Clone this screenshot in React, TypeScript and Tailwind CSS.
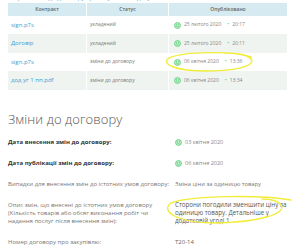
import React from "react";

const ClockIcon = () => (
  <svg width="7" height="7" viewBox="0 0 12 12" className="shrink-0">
    <circle cx="6" cy="6" r="5" fill="#c9f0d3" stroke="#5fcf7c" strokeWidth="1.6" />
    <path d="M4.2 3.6 V6.4 A1.8 1.8 0 0 0 7.8 6.4 V3.6" fill="none" stroke="#5fcf7c" strokeWidth="1.3" strokeLinecap="round" />
  </svg>
);

const rows = [
  { file: "sign.p7s", status: "укладений", date: "25 лютого 2020", time: "20:17", gray: false, h: "h-[18px]" },
  { file: "Договір", status: "укладений", date: "25 лютого 2020", time: "20:11", gray: true, h: "h-[19px]" },
  { file: "sign.p7s", status: "зміни до договору", date: "06 квітня 2020", time: "13:36", gray: false, h: "h-[18px]" },
  { file: "дод уг 1 пп.pdf", status: "зміни до договору", date: "06 квітня 2020", time: "13:34", gray: true, h: "h-[19px]" },
];

export default function App() {
  return (
    <div
      className="relative w-[300px] h-[247px] overflow-hidden bg-white"
      style={{ fontFamily: '"Open Sans", "Noto Sans", sans-serif' }}
    >
      <div className="h-[2px] overflow-hidden pl-[10px]">
        <div className="-mt-[6px] text-[6px] leading-[8px] text-[#3b9fd6] whitespace-nowrap">
          Перелік змін до договору про закупівлю та документи
        </div>
      </div>
      <div className="ml-[8px] mt-[1px] w-[279px]">
        <div className="grid grid-cols-[78px_81px_118px] gap-x-px h-[13px]">
          {["Контракт", "Статус", "Опубліковано"].map((t) => (
            <div
              key={t}
              className="bg-[#d5eaf1] flex items-center justify-center text-[5px] leading-none font-semibold text-[#666]"
            >
              {t}
            </div>
          ))}
        </div>
        {rows.map((r, i) => (
          <div key={i} className={`grid grid-cols-[78px_81px_118px] gap-x-px bg-white ${r.h}`}>
            <div className={`flex items-center pl-[3px] text-[6px] text-[#3b9fd6] ${r.gray ? "bg-[#eff4f1]" : "bg-white"}`}>
              {r.file}
            </div>
            <div className={`flex items-center pl-[3px] text-[5px] text-[#777] ${r.gray ? "bg-[#eff4f1]" : "bg-white"}`}>
              {r.status}
            </div>
            <div className={`flex items-center pl-[5px] gap-[2px] text-[5px] text-[#888] ${r.gray ? "bg-[#eff4f1]" : "bg-white"}`}>
              <ClockIcon />
              <span className="ml-[1px]">{r.date}</span>
              <span className="ml-[4px] text-[#5fcf7c]">•</span>
              <span className="ml-[1px]">{r.time}</span>
            </div>
          </div>
        ))}
      </div>

      <h2 className="ml-[8px] mt-[21px] text-[13px] leading-[16px] font-light text-[#555] tracking-[0.1px]">
        Зміни до договору
      </h2>

      <div className="ml-[8px] mt-[11px] grid grid-cols-[167px_1fr] gap-y-[13px] text-[6px] leading-[8px]">
        <div className="font-bold text-[#333]">Дата внесення змін до договору:</div>
        <div className="flex items-center gap-[3px] text-[#888] text-[5.5px]">
          <ClockIcon />
          <span>03 квітня 2020</span>
        </div>

        <div className="font-bold text-[#333]">Дата публікації змін до договору:</div>
        <div className="flex items-center gap-[3px] text-[#888] text-[5.5px]">
          <ClockIcon />
          <span>06 квітня 2020</span>
        </div>

        <div className="text-[#777]">Випадки для внесення змін до істотних умов договору:</div>
        <div className="text-[#777] text-[5.8px]">Зміна ціни за одиницю товару</div>

        <div className="text-[#777] pr-[6px]">
          Опис змін, що внесені до істотних умов договору (Кількість товарів або обсяг виконання робіт чи надання послуг після внесення змін):
        </div>
        <div className="text-[#555] text-[6.2px] pr-[4px]">
          Сторони погодили зменшити ціну за одиницю товару. Детальніше у додатковій угоді 1.
        </div>

        <div className="text-[#777]">Номер договору про закупівлю:</div>
        <div className="text-[#666] text-[6px]">Т20-14</div>
      </div>

      <svg className="absolute inset-0 pointer-events-none" width="300" height="247" viewBox="0 0 300 247">
        <path
          d="M251 57 C236 51, 184 51, 169 58 C160 64, 176 71, 206 71 C236 71, 256 66, 251 59 C248 55, 236 53, 224 53"
          fill="none"
          stroke="#f2ec3a"
          strokeWidth="1.4"
          strokeLinecap="round"
        />
        <path
          d="M291 200 C262 195, 192 195, 171 203 C160 211, 176 223, 217 223 C258 222, 287 214, 281 205 C278 201, 270 199, 262 199"
          fill="none"
          stroke="#f2ec3a"
          strokeWidth="1.4"
          strokeLinecap="round"
        />
      </svg>
    </div>
  );
}
